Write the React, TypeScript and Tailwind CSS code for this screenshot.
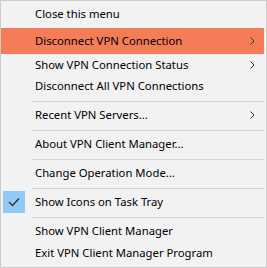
import React from 'react';

type Entry =
  | { kind: 'item'; label: string; sub?: boolean; checked?: boolean; active?: boolean; h: string }
  | { kind: 'sep' }
  | { kind: 'gap' };

const Chevron = () => (
  <svg width="5" height="8" viewBox="0 0 5 8" className="shrink-0">
    <polyline points="0.5,0.5 4,4 0.5,7.5" fill="none" stroke="#333" strokeWidth="1" />
  </svg>
);

const Check = () => (
  <svg width="12" height="10" viewBox="0 0 12 10">
    <polyline points="1,5 4.5,8.5 11,1.5" fill="none" stroke="#333" strokeWidth="1.4" />
  </svg>
);

const App = () => {
  const entries: Entry[] = [
    { kind: 'item', label: 'Close this menu', h: 'h-[22px]' },
    { kind: 'gap' },
    { kind: 'item', label: 'Disconnect VPN Connection', sub: true, active: true, h: 'h-[26px]' },
    { kind: 'item', label: 'Show VPN Connection Status', sub: true, h: 'h-[21px]' },
    { kind: 'item', label: 'Disconnect All VPN Connections', h: 'h-[22px]' },
    { kind: 'sep' },
    { kind: 'item', label: 'Recent VPN Servers...', sub: true, h: 'h-[22px]' },
    { kind: 'sep' },
    { kind: 'item', label: 'About VPN Client Manager...', h: 'h-[22px]' },
    { kind: 'sep' },
    { kind: 'item', label: 'Change Operation Mode...', h: 'h-[22px]' },
    { kind: 'sep' },
    { kind: 'item', label: 'Show Icons on Task Tray', checked: true, h: 'h-[22px]' },
    { kind: 'sep' },
    { kind: 'item', label: 'Show VPN Client Manager', h: 'h-[22px]' },
    { kind: 'item', label: 'Exit VPN Client Manager Program', h: 'h-[22px]' },
  ];

  return (
    <div className="w-[267px] h-[268px] bg-[#f2f2f2] border border-[#cccccc] pt-[2px] text-[11.3px] text-black font-['Noto_Sans',sans-serif] overflow-hidden">
      {entries.map((e, i) => {
        if (e.kind === 'gap') return <div key={i} className="h-[3px]" />;
        if (e.kind === 'sep')
          return (
            <div key={i} className="h-[7px] pt-[4px] pl-[31px] pr-[2px]">
              <div className="h-px bg-[#d7d7d7]" />
            </div>
          );
        return (
          <div
            key={i}
            className={`${e.h} flex items-center mr-[2px] ${e.active ? 'bg-[#f47d58]' : ''}`}
          >
            <div className="w-[31px] h-full flex items-center pl-[2px]">
              {e.checked && (
                <div className="w-[22px] h-[22px] bg-[#91c9f7] flex items-center justify-center">
                  <Check />
                </div>
              )}
            </div>
            <span className="pl-[3px] flex-1 leading-none whitespace-nowrap">{e.label}</span>
            <div className="w-[14px] flex items-center">{e.sub && <Chevron />}</div>
          </div>
        );
      })}
    </div>
  );
};

export default App;
